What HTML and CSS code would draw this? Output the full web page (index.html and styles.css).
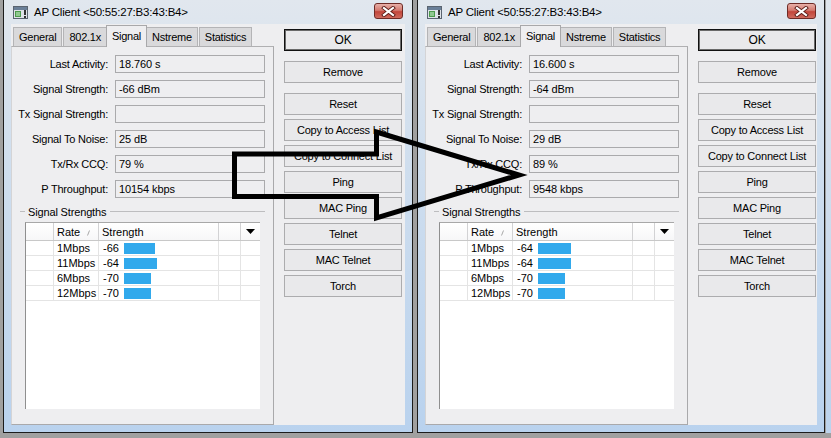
FILE: index.html
```html
<!DOCTYPE html>
<html>
<head>
<meta charset="utf-8">
<title>AP Client</title>
<link rel="stylesheet" href="styles.css">
</head>
<body>
<div class="desk">
  <div class="win">
    <div class="titlebar">
      <svg class="appicon" width="15" height="13" viewBox="0 0 15 13"><rect x="0.5" y="0.5" width="14" height="12" fill="#dfe3e8" stroke="#5a6470"/><rect x="1" y="1" width="13" height="3" fill="#6a7f98"/><rect x="2" y="5" width="6" height="6" fill="#4c9a4c"/><rect x="3" y="6" width="4" height="4" fill="#8fc98f"/><rect x="11" y="4" width="2" height="5" fill="#333"/><rect x="11" y="10" width="2" height="2" fill="#333"/></svg>
      <span class="title">AP Client &lt;50:55:27:B3:43:B4&gt;</span>
      <div class="close"><svg width="15" height="11" viewBox="0 0 15 11"><path d="M3 2 L12 9 M12 2 L3 9" stroke="#5b1d18" stroke-width="4" stroke-linecap="square"/><path d="M3 2 L12 9 M12 2 L3 9" stroke="#fff" stroke-width="2.2" stroke-linecap="square"/></svg></div>
    </div>
    <div class="client">
      <div class="tabctl">
        <div class="tabs">
          <div class="tab">General</div>
          <div class="tab">802.1x</div>
          <div class="tab sel">Signal</div>
          <div class="tab">Nstreme</div>
          <div class="tab">Statistics</div>
        </div>
        <div class="panel">
          <div class="form">
            <div class="lbl">Last Activity:</div><div class="field">18.760 s</div>
            <div class="lbl">Signal Strength:</div><div class="field">-66 dBm</div>
            <div class="lbl">Tx Signal Strength:</div><div class="field"></div>
            <div class="lbl">Signal To Noise:</div><div class="field">25 dB</div>
            <div class="lbl">Tx/Rx CCQ:</div><div class="field">79 %</div>
            <div class="lbl">P Throughput:</div><div class="field">10154 kbps</div>
          </div>
          <div class="section"><span>Signal Strengths</span></div>
          <div class="list">
            <div class="lhead">
              <div class="c"></div>
              <div class="c c1">Rate<svg class="sort" width="3" height="6" viewBox="0 0 3 6"><path d="M0.5 5.5 L2.5 0.5" stroke="#a8a8a8" stroke-width="1"/></svg></div>
              <div class="c c2">Strength</div>
              <div class="c"></div>
              <div class="c c4"><svg width="9" height="5" viewBox="0 0 9 5"><path d="M0 0 H9 L4.5 5 Z" fill="#000"/></svg></div>
            </div>
            <div class="lrow"><div class="c"></div><div class="c c1">1Mbps</div><div class="c c2"><span class="val">-66</span><span class="bar" style="width:31px"></span></div><div class="c"></div><div class="c"></div></div>
            <div class="lrow"><div class="c"></div><div class="c c1">11Mbps</div><div class="c c2"><span class="val">-64</span><span class="bar" style="width:33px"></span></div><div class="c"></div><div class="c"></div></div>
            <div class="lrow"><div class="c"></div><div class="c c1">6Mbps</div><div class="c c2"><span class="val">-70</span><span class="bar" style="width:27px"></span></div><div class="c"></div><div class="c"></div></div>
            <div class="lrow"><div class="c"></div><div class="c c1">12Mbps</div><div class="c c2"><span class="val">-70</span><span class="bar" style="width:27px"></span></div><div class="c"></div><div class="c"></div></div>
          </div>
        </div>
      </div>
      <div class="buttons">
        <div class="btn ok">OK</div>
        <div class="btn sep">Remove</div>
        <div class="btn">Reset</div>
        <div class="btn">Copy to Access List</div>
        <div class="btn">Copy to Connect List</div>
        <div class="btn">Ping</div>
        <div class="btn">MAC Ping</div>
        <div class="btn">Telnet</div>
        <div class="btn">MAC Telnet</div>
        <div class="btn">Torch</div>
      </div>
    </div>
  </div>

  <div class="win narrow">
    <div class="titlebar">
      <svg class="appicon" width="15" height="13" viewBox="0 0 15 13"><rect x="0.5" y="0.5" width="14" height="12" fill="#dfe3e8" stroke="#5a6470"/><rect x="1" y="1" width="13" height="3" fill="#6a7f98"/><rect x="2" y="5" width="6" height="6" fill="#4c9a4c"/><rect x="3" y="6" width="4" height="4" fill="#8fc98f"/><rect x="11" y="4" width="2" height="5" fill="#333"/><rect x="11" y="10" width="2" height="2" fill="#333"/></svg>
      <span class="title">AP Client &lt;50:55:27:B3:43:B4&gt;</span>
      <div class="close"><svg width="15" height="11" viewBox="0 0 15 11"><path d="M3 2 L12 9 M12 2 L3 9" stroke="#5b1d18" stroke-width="4" stroke-linecap="square"/><path d="M3 2 L12 9 M12 2 L3 9" stroke="#fff" stroke-width="2.2" stroke-linecap="square"/></svg></div>
    </div>
    <div class="client">
      <div class="tabctl">
        <div class="tabs">
          <div class="tab">General</div>
          <div class="tab">802.1x</div>
          <div class="tab sel">Signal</div>
          <div class="tab">Nstreme</div>
          <div class="tab">Statistics</div>
        </div>
        <div class="panel">
          <div class="form">
            <div class="lbl">Last Activity:</div><div class="field">16.600 s</div>
            <div class="lbl">Signal Strength:</div><div class="field">-64 dBm</div>
            <div class="lbl">Tx Signal Strength:</div><div class="field"></div>
            <div class="lbl">Signal To Noise:</div><div class="field">29 dB</div>
            <div class="lbl">Tx/Rx CCQ:</div><div class="field">89 %</div>
            <div class="lbl">P Throughput:</div><div class="field">9548 kbps</div>
          </div>
          <div class="section"><span>Signal Strengths</span></div>
          <div class="list">
            <div class="lhead">
              <div class="c"></div>
              <div class="c c1">Rate<svg class="sort" width="3" height="6" viewBox="0 0 3 6"><path d="M0.5 5.5 L2.5 0.5" stroke="#a8a8a8" stroke-width="1"/></svg></div>
              <div class="c c2">Strength</div>
              <div class="c"></div>
              <div class="c c4"><svg width="9" height="5" viewBox="0 0 9 5"><path d="M0 0 H9 L4.5 5 Z" fill="#000"/></svg></div>
            </div>
            <div class="lrow"><div class="c"></div><div class="c c1">1Mbps</div><div class="c c2"><span class="val">-64</span><span class="bar" style="width:33px"></span></div><div class="c"></div><div class="c"></div></div>
            <div class="lrow"><div class="c"></div><div class="c c1">11Mbps</div><div class="c c2"><span class="val">-64</span><span class="bar" style="width:33px"></span></div><div class="c"></div><div class="c"></div></div>
            <div class="lrow"><div class="c"></div><div class="c c1">6Mbps</div><div class="c c2"><span class="val">-70</span><span class="bar" style="width:27px"></span></div><div class="c"></div><div class="c"></div></div>
            <div class="lrow"><div class="c"></div><div class="c c1">12Mbps</div><div class="c c2"><span class="val">-70</span><span class="bar" style="width:27px"></span></div><div class="c"></div><div class="c"></div></div>
          </div>
        </div>
      </div>
      <div class="buttons">
        <div class="btn ok">OK</div>
        <div class="btn sep">Remove</div>
        <div class="btn">Reset</div>
        <div class="btn">Copy to Access List</div>
        <div class="btn">Copy to Connect List</div>
        <div class="btn">Ping</div>
        <div class="btn">MAC Ping</div>
        <div class="btn">Telnet</div>
        <div class="btn">MAC Telnet</div>
        <div class="btn">Torch</div>
      </div>
    </div>
  </div>
  <div class="edge"></div>
</div>

<svg class="arrow" width="831" height="438" viewBox="0 0 831 438">
  <polygon points="376.5,132 519,175 376.5,218 376.5,196.5 234.5,196.5 234.5,154 376.5,154" fill="none" stroke="#000" stroke-width="5" stroke-linejoin="miter" stroke-miterlimit="10"/>
</svg>
</body>
</html>
```

FILE: styles.css
```css
* { box-sizing: border-box; }
html, body { margin: 0; padding: 0; }
body {
  width: 831px;
  height: 438px;
  background: #a0a0a0;
  font-family: "Liberation Sans", Arial, sans-serif;
  font-size: 11px;
  color: #000;
  position: relative;
  overflow: hidden;
}
.desk {
  display: flex;
  gap: 4px;
  padding-left: 3px;
}
.win {
  width: 410px;
  height: 433px;
  border: 1px solid #1c1c1c;
  border-top: none;
  background: linear-gradient(to bottom, #e1e7ee 0px, #d3e0ee 120px, #b9d2ee 433px);
  display: flex;
  flex-direction: column;
  padding: 0 7px 7px;
  flex: none;
}
.win.narrow { width: 408px; }
.edge {
  width: 6px;
  height: 433px;
  margin-left: -3px;
  background: linear-gradient(to bottom, #dfe5ec, #bcd3ec);
}
.titlebar {
  height: 24px;
  display: flex;
  align-items: center;
  padding: 0 2px 0 2px;
}
.appicon { flex: none; margin-top: 1px; }
.title {
  margin-left: 6px;
  font-size: 11.5px;
  letter-spacing: -0.2px;
  color: #000;
  flex: 1;
}
.close {
  width: 29px;
  height: 16px;
  margin-top: -2px;
  border: 1px solid #6e2b26;
  border-radius: 3px;
  background: linear-gradient(to bottom, #e8b0a8 0%, #d47a70 45%, #c2463b 55%, #cf6a5e 100%);
  display: flex;
  align-items: center;
  justify-content: center;
  flex: none;
}
.narrow .close { margin-right: -1px; }
.client {
  flex: 1;
  background: #eeeef0;
  display: flex;
}
.tabctl {
  width: 263px;
  display: flex;
  flex-direction: column;
  flex: none;
}
.tabs {
  height: 22px;
  display: flex;
  align-items: flex-end;
  padding-left: 2px;
}
.tab {
  height: 19px;
  padding: 0 5px;
  display: flex;
  align-items: center;
  background: #d9d9db;
  border: 1px solid #b4b4b6;
  border-bottom: none;
  margin-right: 1px;
  letter-spacing: -0.25px;
  white-space: nowrap;
}
.tab.sel {
  height: 22px;
  margin: 0 -1px -1px -2px;
  padding: 0 5px 2px;
  background: #eeeef0;
  border-color: #a8a8aa;
  position: relative;
  z-index: 1;
}
.panel {
  flex: 1;
  border: 1px solid #a9a9ab;
  border-top-color: #b0b0b2;
  border-left-color: #d4d4d6;
  display: flex;
  flex-direction: column;
  padding-top: 8px;
}
.form {
  display: grid;
  grid-template-columns: 97px 150px;
  grid-auto-rows: 18px;
  column-gap: 6px;
  row-gap: 7px;
}
.lbl {
  text-align: right;
  align-self: center;
  letter-spacing: -0.2px;
  white-space: nowrap;
  padding-right: 1px;
}
.field {
  border: 1px solid #aaaaac;
  padding-left: 3px;
  display: flex;
  align-items: center;
  letter-spacing: -0.1px;
}
.section {
  margin: 7px 0 0 8px;
  width: 245px;
  height: 13px;
  display: flex;
  align-items: center;
}
.section::before {
  content: "";
  width: 5px;
  border-top: 1px solid #bdbdbf;
}
.section::after {
  content: "";
  flex: 1;
  border-top: 1px solid #bdbdbf;
}
.section span {
  padding: 0 4px 0 3px;
  letter-spacing: -0.15px;
}
.list {
  margin: 4px 0 0 13px;
  width: 235px;
  height: 187px;
  background: #fff;
  border-top: 1px solid #a8a8a8;
  border-left: 1px solid #8f8f8f;
}
.lhead, .lrow {
  display: grid;
  grid-template-columns: 28px 45px 120px 22px 19px;
}
.lhead {
  height: 18px;
  border-bottom: 1px solid #c8c8c8;
  background: linear-gradient(#ffffff, #f7f7f8);
}
.lhead .c { border-right: 1px solid #d2d2d4; display: flex; align-items: center; }
.lhead .c:last-child { border-right: none; }
.lrow { height: 15px; border-bottom: 1px solid #e4e4e4; }
.lrow .c { border-right: 1px solid #e4e4e4; display: flex; align-items: center; }
.lrow .c:last-child { border-right: none; }
.c1 { padding-left: 3px; }
.lhead .c1 { justify-content: space-between; padding-right: 8px; }
.lhead .c2 { padding-left: 3px; }
.lrow .c2 { padding-left: 4px; }
.c4 { justify-content: center; }
.val { width: 21px; }
.bar { height: 11px; background: #31a9ec; }
.sort { margin-top: 2px; }
.buttons {
  width: 118px;
  margin: 5px 0 0 10px;
  display: flex;
  flex-direction: column;
  gap: 4px;
  flex: none;
}
.btn {
  height: 22px;
  border: 1px solid #acacae;
  background: #e9e9eb;
  display: flex;
  align-items: center;
  justify-content: center;
  letter-spacing: -0.2px;
  white-space: nowrap;
}
.btn.ok {
  border: 1px solid #111;
  box-shadow: inset 0 0 0 1px #6a6a6a;
  font-size: 12px;
  margin-bottom: 6px;
}
.btn.sep { margin-bottom: 6px; }
.arrow {
  position: absolute;
  left: 0;
  top: 0;
  pointer-events: none;
}
```
